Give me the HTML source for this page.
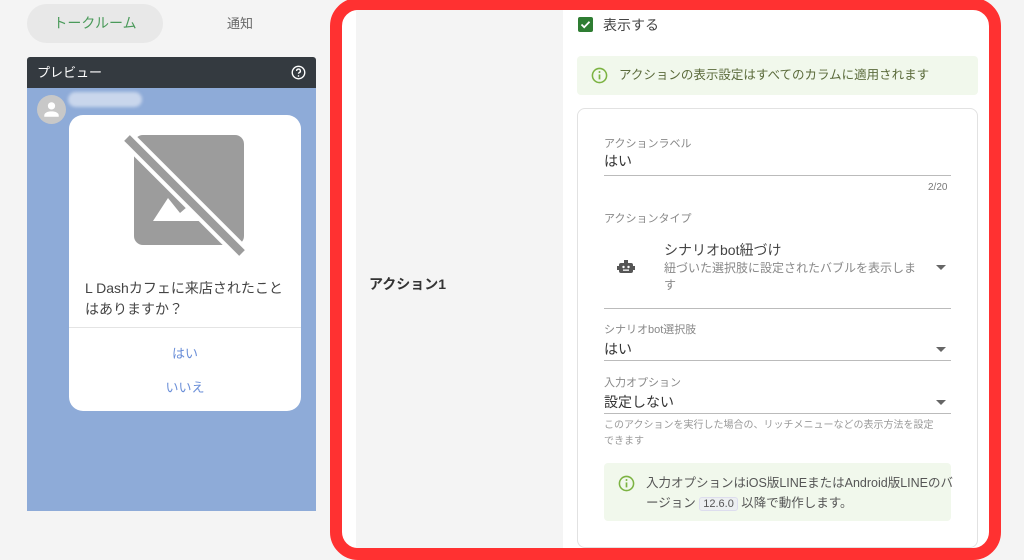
<!DOCTYPE html><html><head><meta charset="utf-8"><style>
*{margin:0;padding:0;box-sizing:border-box}
body{width:1024px;height:560px;overflow:hidden;background:#f4f4f4;font-family:"Liberation Sans","Noto Sans CJK JP",sans-serif;position:relative;color:#333}
.a{position:absolute}
.lbl{font-size:11px;color:#888}
.val{font-size:14px;color:#333}
.line{border-bottom:1px solid #bbb}
.tri{width:0;height:0;border-left:5px solid transparent;border-right:5px solid transparent;border-top:5px solid #666}
</style></head><body>
<div class="a" style="left:27px;top:4px;width:136px;height:39px;background:#e8e8e8;border-radius:20px;color:#4a9a5a;font-size:14px;text-align:center;line-height:39px">トークルーム</div>
<div class="a" style="left:200px;top:4px;width:80px;line-height:39px;text-align:center;font-size:13px;color:#666">通知</div>
<div class="a" style="left:27px;top:57px;width:289px;height:31px;background:#343a40;border-radius:3px 3px 0 0;color:#fff;font-size:13px;line-height:31px;padding-left:10px">プレビュー
<svg class="a" style="right:10px;top:8px" width="15" height="15" viewBox="0 0 24 24"><circle cx="12" cy="12" r="10" fill="none" stroke="#fff" stroke-width="2.2"/><path d="M9 9.5a3 3 0 1 1 4 2.8c-.8.4-1 1-1 1.7" fill="none" stroke="#fff" stroke-width="2.2"/><circle cx="12" cy="17.5" r="1.3" fill="#fff"/></svg></div>
<div class="a" style="left:27px;top:88px;width:289px;height:423px;background:#8eabd8"></div>
<div class="a" style="left:37px;top:95px;width:29px;height:29px;border-radius:50%;background:#c8c8c8"><svg width="29" height="29" viewBox="0 0 24 24"><circle cx="12" cy="9" r="3" fill="#fff"/><path d="M6 17c0-2.5 3-3.5 6-3.5s6 1 6 3.5v1H6z" fill="#fff"/></svg></div>
<div class="a" style="left:68px;top:92px;width:74px;height:15px;border-radius:8px;background:#c9d6ec;filter:blur(1.5px)"></div>
<div class="a" style="left:69px;top:115px;width:232px;height:296px;background:#fff;border-radius:14px">
<svg class="a" style="left:55px;top:18px" width="125" height="125" viewBox="0 0 125 125"><rect x="10" y="2" width="110" height="110" rx="9" fill="#9c9c9c"/><path d="M29 88 L44 65 L56 80 L63 74 L78 88Z" fill="#fff"/><line x1="3" y1="5" x2="118" y2="120" stroke="#fff" stroke-width="16"/><line x1="3" y1="5" x2="118" y2="120" stroke="#9c9c9c" stroke-width="8"/></svg>
<div class="a" style="left:16px;top:163px;font-size:14px;line-height:21px;color:#444">L Dashカフェに来店されたこと<br>はありますか？</div>
<div class="a" style="left:0;top:212px;width:232px;border-top:1px solid #e4e4e4"></div>
<div class="a" style="left:0;top:228px;width:232px;text-align:center;font-size:13px;color:#6b8fd8">はい</div>
<div class="a" style="left:0;top:262px;width:232px;text-align:center;font-size:13px;color:#6b8fd8">いいえ</div>
</div>
<div class="a" style="left:330px;top:-2px;width:671px;height:562px;border:12px solid #ff3131;border-radius:28px;background:#fff;overflow:hidden">
<div class="a" style="left:14px;top:0;width:207px;height:560px;background:#f4f4f4"></div>
<div class="a" style="left:27px;top:264px;font-size:14px;font-weight:bold;color:#333">アクション1</div>
</div>
<div class="a" style="left:578px;top:17px;width:15px;height:15px;background:#2e7d32;border-radius:2px"><svg width="15" height="15" viewBox="0 0 15 15"><path d="M3.5 7.5l2.7 2.7 5.3-5.5" fill="none" stroke="#fff" stroke-width="1.8"/></svg></div>
<div class="a" style="left:603px;top:15px;font-size:14px;color:#444">表示する</div>
<div class="a" style="left:577px;top:56px;width:401px;height:39px;background:#f1f8ec;border-radius:4px;font-size:12.5px;color:#5a6a3a;line-height:39px;padding-left:42px;white-space:nowrap">アクションの表示設定はすべてのカラムに適用されます
<svg class="a" style="left:14px;top:11px" width="17" height="17" viewBox="0 0 24 24"><circle cx="12" cy="12" r="10" fill="none" stroke="#7cb342" stroke-width="2.2"/><path d="M12 10.5v7" stroke="#7cb342" stroke-width="2.4"/><circle cx="12" cy="7" r="1.4" fill="#7cb342"/></svg></div>
<div class="a" style="left:577px;top:108px;width:401px;height:440px;border:1px solid #e2e2e2;border-radius:8px;background:#fff"></div>
<div class="a lbl" style="left:604px;top:135px">アクションラベル</div>
<div class="a val line" style="left:604px;top:151px;width:347px;height:25px">はい</div>
<div class="a" style="left:928px;top:182px;font-size:10px;color:#777">2/20</div>
<div class="a lbl" style="left:604px;top:210px">アクションタイプ</div>
<svg class="a" style="left:617px;top:258px" width="18" height="18" viewBox="0 0 18 18"><rect x="2" y="5" width="14" height="10" rx="2" fill="#555"/><rect x="7" y="2" width="4" height="3" fill="#555"/><rect x="0" y="8" width="2" height="4" fill="#555"/><rect x="16" y="8" width="2" height="4" fill="#555"/><circle cx="6.5" cy="9" r="1.2" fill="#fff"/><circle cx="11.5" cy="9" r="1.2" fill="#fff"/><rect x="6" y="11.5" width="6" height="1.3" fill="#fff"/></svg>
<div class="a" style="left:664px;top:240px;font-size:14px;color:#444">シナリオbot紐づけ</div>
<div class="a" style="left:664px;top:260px;font-size:12px;color:#888;line-height:17px;width:260px">紐づいた選択肢に設定されたバブルを表示しま<br>す</div>
<div class="a tri" style="left:936px;top:265px"></div>
<div class="a line" style="left:604px;top:308px;width:347px"></div>
<div class="a lbl" style="left:604px;top:321px">シナリオbot選択肢</div>
<div class="a val line" style="left:604px;top:339px;width:347px;height:22px">はい</div>
<div class="a tri" style="left:936px;top:347px"></div>
<div class="a lbl" style="left:604px;top:374px">入力オプション</div>
<div class="a val line" style="left:604px;top:392px;width:347px;height:22px">設定しない</div>
<div class="a tri" style="left:936px;top:400px"></div>
<div class="a" style="left:604px;top:418px;font-size:10px;color:#999;line-height:16px">このアクションを実行した場合の、リッチメニューなどの表示方法を設定<br>できます</div>
<div class="a" style="left:604px;top:463px;width:347px;height:58px;background:#f1f8ec;border-radius:4px;padding:10px 0 0 42px;font-size:12.5px;color:#555;line-height:20px;white-space:nowrap">入力オプションはiOS版LINEまたはAndroid版LINEのバ<br>ージョン <span style="font-size:11px;background:#eceff1;border:1px solid #dde;border-radius:3px;padding:0 3px">12.6.0</span> 以降で動作します。
<svg class="a" style="left:14px;top:12px" width="17" height="17" viewBox="0 0 24 24"><circle cx="12" cy="12" r="10" fill="none" stroke="#7cb342" stroke-width="2.2"/><path d="M12 10.5v7" stroke="#7cb342" stroke-width="2.4"/><circle cx="12" cy="7" r="1.4" fill="#7cb342"/></svg></div>
</body></html>
